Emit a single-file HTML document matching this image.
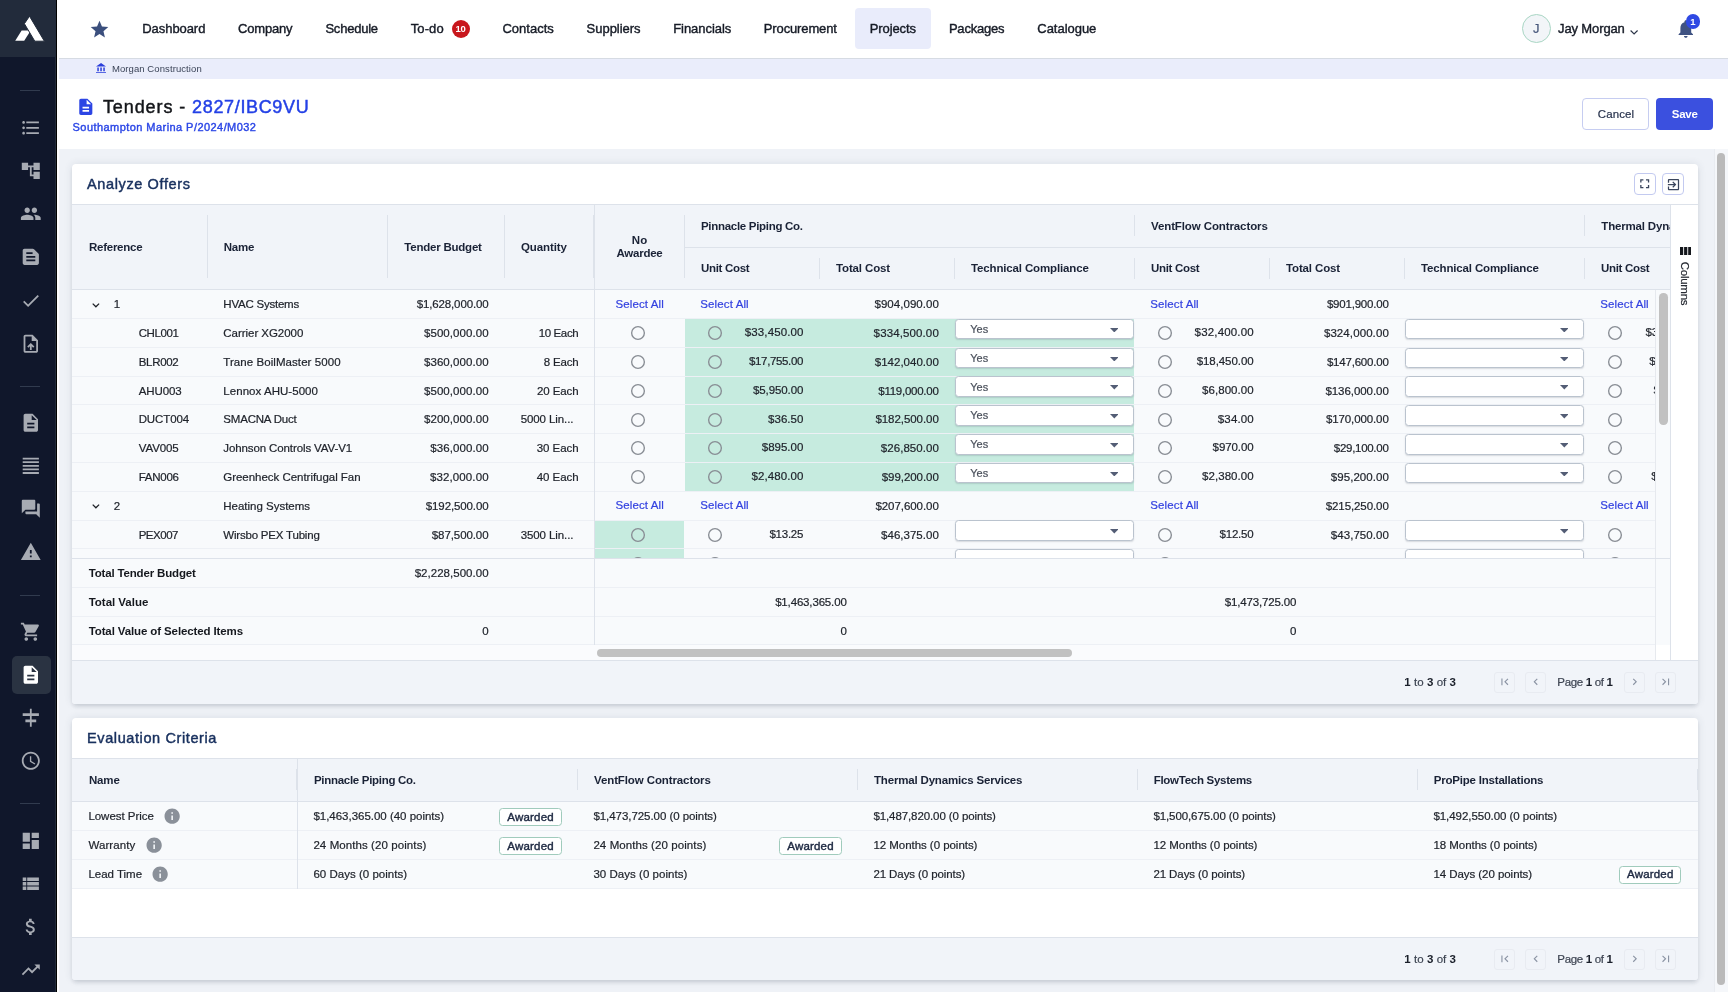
<!DOCTYPE html>
<html lang="en"><head><meta charset="utf-8"><title>Tenders - 2827/IBC9VU</title>
<style>
html,body{margin:0;padding:0}
body{width:1728px;height:992px;overflow:hidden;position:relative;background:#eff2f7;font-family:"Liberation Sans",sans-serif;color:#1f2533}
.t{position:absolute;white-space:pre;display:block;-webkit-text-stroke:.2px}
.t b,.bd,.ns{-webkit-text-stroke:0}
.t b{color:#1b202b}
.b{position:absolute;box-sizing:border-box}
.i{position:absolute;display:block}
.clip{position:absolute;overflow:hidden}
.m{-webkit-text-stroke:.4px}
.m2{-webkit-text-stroke:.45px}
#root{position:absolute;left:0;top:0;width:1728px;height:992px;will-change:transform}
</style></head><body><div id="root">
<div class="b" style="left:0.00px;top:0.00px;width:55.00px;height:992.00px;background:#10172b"></div>
<div class="b" style="left:55.00px;top:0.00px;width:1.00px;height:992.00px;background:#222b39"></div>
<div class="b" style="left:56.00px;top:0.00px;width:1.20px;height:992.00px;background:#000"></div>
<div class="b" style="left:0.00px;top:0.00px;width:56.00px;height:57.00px;background:#222b3b"></div>
<svg class="i" style="left:0;top:0;width:55px;height:57px" viewBox="0 0 55 57"><path fill="#fff" d="M21.6 30.4H28.6L29.6 32.3L24.2 40.7H15.2z"/><path fill="#fff" stroke="#222b3b" stroke-width="1" d="M29.5 16.2L44.4 41.2H34.8L24.4 23.7z"/></svg>
<div class="b" style="left:20.00px;top:90.20px;width:20.00px;height:1.30px;background:#313b4e"></div>
<div class="b" style="left:20.00px;top:385.70px;width:20.00px;height:1.30px;background:#313b4e"></div>
<div class="b" style="left:20.00px;top:594.70px;width:20.00px;height:1.30px;background:#313b4e"></div>
<div class="b" style="left:20.00px;top:802.80px;width:20.00px;height:1.30px;background:#313b4e"></div>
<div class="b" style="left:11.50px;top:655.50px;width:39.00px;height:38.50px;background:#2a3342;border-radius:5px"></div>
<svg class="i" style="left:19.90px;top:116.80px;width:21.6px;height:21.6px;" viewBox="0 0 24 24"><path fill="#a7abb3" d="M4 10.5c-.83 0-1.5.67-1.5 1.5s.67 1.5 1.5 1.5 1.5-.67 1.5-1.5-.67-1.5-1.5-1.5zm0-6c-.83 0-1.5.67-1.5 1.5S3.17 7.5 4 7.5 5.5 6.83 5.5 6 4.83 4.5 4 4.5zm0 12c-.83 0-1.5.68-1.5 1.5s.68 1.5 1.5 1.5 1.5-.68 1.5-1.5-.67-1.5-1.5-1.5zM7 19h14v-2H7v2zm0-6h14v-2H7v2zm0-8v2h14V5H7z"/></svg>
<svg class="i" style="left:19.90px;top:159.80px;width:21.6px;height:21.6px;" viewBox="0 0 24 24"><path fill="#a7abb3" d="M22 11V3h-7v3H9V3H2v8h7V8h2v10h4v3h7v-8h-7v3h-2V8h2v3z"/></svg>
<svg class="i" style="left:19.90px;top:203.20px;width:21.6px;height:21.6px;" viewBox="0 0 24 24"><path fill="#a7abb3" d="M16 11c1.66 0 2.99-1.34 2.99-3S17.66 5 16 5c-1.66 0-3 1.34-3 3s1.34 3 3 3zm-8 0c1.66 0 2.99-1.34 2.99-3S9.66 5 8 5C6.34 5 5 6.34 5 8s1.34 3 3 3zm0 2c-2.33 0-7 1.17-7 3.5V19h14v-2.5c0-2.33-4.67-3.5-7-3.5zm8 0c-.29 0-.62.02-.97.05 1.16.84 1.97 1.97 1.97 3.45V19h6v-2.5c0-2.33-4.67-3.5-7-3.5z"/></svg>
<svg class="i" style="left:19.90px;top:246.40px;width:21.6px;height:21.6px;" viewBox="0 0 24 24"><path fill="#a7abb3" d="M20.41 8.41l-4.83-4.83c-.37-.37-.88-.58-1.41-.58H5c-1.1 0-2 .9-2 2v14c0 1.1.9 2 2 2h14c1.1 0 2-.9 2-2V9.83c0-.53-.21-1.04-.59-1.42zM7 7h7v2H7V7zm10 10H7v-2h10v2zm0-4H7v-2h10v2z"/></svg>
<svg class="i" style="left:19.90px;top:289.60px;width:21.6px;height:21.6px;" viewBox="0 0 24 24"><path fill="#a7abb3" d="M9 16.17L4.83 12l-1.42 1.41L9 19 21 7l-1.41-1.41z"/></svg>
<svg class="i" style="left:19.90px;top:332.80px;width:21.6px;height:21.6px;" viewBox="0 0 24 24"><path fill="#a7abb3" d="M14 2H6c-1.1 0-2 .9-2 2v16c0 1.1.9 2 2 2h12c1.1 0 2-.9 2-2V8l-6-6zm4 18H6V4h7v5h5v11zM8 15.01l1.41 1.41L11 14.84V19h2v-4.16l1.59 1.59L16 15.01 12.01 11 8 15.01z"/></svg>
<svg class="i" style="left:19.90px;top:412.00px;width:21.6px;height:21.6px;" viewBox="0 0 24 24"><path fill="#a7abb3" d="M14 2H6c-1.1 0-1.99.9-1.99 2L4 20c0 1.1.89 2 1.99 2H18c1.1 0 2-.9 2-2V8l-6-6zm2 16H8v-2h8v2zm0-4H8v-2h8v2zm-3-5V3.5L18.5 9H13z"/></svg>
<svg class="i" style="left:19.90px;top:455.20px;width:21.6px;height:21.6px;" viewBox="0 0 24 24"><path fill="#a7abb3" d="M3 21h18v-2H3v2zm0-4h18v-2H3v2zm0-4h18v-2H3v2zm0-4h18V7H3v2zm0-6v2h18V3H3z"/></svg>
<svg class="i" style="left:19.90px;top:498.40px;width:21.6px;height:21.6px;" viewBox="0 0 24 24"><path fill="#a7abb3" d="M21 6h-2v9H6v2c0 .55.45 1 1 1h11l4 4V7c0-.55-.45-1-1-1zm-4 6V3c0-.55-.45-1-1-1H3c-.55 0-1 .45-1 1v14l4-4h10c.55 0 1-.45 1-1z"/></svg>
<svg class="i" style="left:19.90px;top:541.40px;width:21.6px;height:21.6px;" viewBox="0 0 24 24"><path fill="#a7abb3" d="M1 21h22L12 2 1 21zm12-3h-2v-2h2v2zm0-4h-2v-4h2v4z"/></svg>
<svg class="i" style="left:19.90px;top:620.80px;width:21.6px;height:21.6px;" viewBox="0 0 24 24"><path fill="#a7abb3" d="M7 18c-1.1 0-1.99.9-1.99 2S5.900 22 7 22s2-.9 2-2-.9-2-2-2zM1 2v2h2l3.600 7.590-1.350 2.450c-.16.28-.25.61-.25.96 0 1.100.9 2 2 2h12v-2H7.420c-.14 0-.25-.11-.25-.25l.03-.12.9-1.630h7.450c.75 0 1.410-.41 1.750-1.030l3.580-6.490c.08-.14.12-.31.12-.48 0-.55-.45-1-1-1H5.210l-.94-2H1zm16 16c-1.100 0-1.990.9-1.990 2s.89 2 1.990 2 2-.9 2-2-.9-2-2-2z"/></svg>
<svg class="i" style="left:19.90px;top:664.00px;width:21.6px;height:21.6px;" viewBox="0 0 24 24"><path fill="#ffffff" d="M14 2H6c-1.1 0-1.99.9-1.99 2L4 20c0 1.1.89 2 1.99 2H18c1.1 0 2-.9 2-2V8l-6-6zm2 16H8v-2h8v2zm0-4H8v-2h8v2zm-3-5V3.5L18.5 9H13z"/></svg>
<svg class="i" style="left:19.90px;top:707.00px;width:21.6px;height:21.6px;" viewBox="0 0 24 24"><path fill="#a7abb3" d="M11 2h2v5h8v3h-8v4h5v3h-5v5h-2v-5H6v-3h5v-4H3V7h8V2z"/></svg>
<svg class="i" style="left:19.90px;top:750.20px;width:21.6px;height:21.6px;" viewBox="0 0 24 24"><path fill="#a7abb3" d="M11.99 2C6.47 2 2 6.48 2 12s4.47 10 9.990 10C17.520 22 22 17.520 22 12S17.520 2 11.990 2zM12 20c-4.420 0-8-3.580-8-8s3.580-8 8-8 8 3.580 8 8-3.580 8-8 8zm.5-13H11v6l5.250 3.150.75-1.230-4.500-2.670z"/></svg>
<svg class="i" style="left:19.90px;top:829.60px;width:21.6px;height:21.6px;" viewBox="0 0 24 24"><path fill="#a7abb3" d="M3 13h8V3H3v10zm0 8h8v-6H3v6zm10 0h8V11h-8v10zm0-18v6h8V3h-8z"/></svg>
<svg class="i" style="left:19.90px;top:872.80px;width:21.6px;height:21.6px;" viewBox="0 0 24 24"><path fill="#a7abb3" d="M3 14h4v-4H3v4zm0 5h4v-4H3v4zM3 9h4V5H3v4zm5 5h13v-4H8v4zm0 5h13v-4H8v4zM8 5v4h13V5H8z"/></svg>
<svg class="i" style="left:19.90px;top:915.80px;width:21.6px;height:21.6px;" viewBox="0 0 24 24"><path fill="#a7abb3" d="M11.8 10.9c-2.270-.59-3-1.200-3-2.150 0-1.090 1.010-1.850 2.700-1.850 1.780 0 2.440.85 2.500 2.100h2.210c-.07-1.720-1.120-3.300-3.210-3.810V3h-3v2.160c-1.940.42-3.500 1.680-3.500 3.610 0 2.310 1.910 3.460 4.700 4.130 2.500.6 3 1.480 3 2.410 0 .69-.49 1.790-2.700 1.790-2.060 0-2.870-.92-2.980-2.100h-2.200c.12 2.190 1.760 3.420 3.680 3.830V21h3v-2.150c1.950-.37 3.500-1.500 3.500-3.550 0-2.840-2.430-3.810-4.700-4.400z"/></svg>
<svg class="i" style="left:19.90px;top:958.80px;width:21.6px;height:21.6px;" viewBox="0 0 24 24"><path fill="#a7abb3" d="M16 6l2.290 2.290-4.880 4.880-4-4L2 16.590 3.410 18l6-6 4 4 6.300-6.290L22 12V6z"/></svg>
<div class="b" style="left:57.00px;top:0.00px;width:1671.00px;height:57.50px;background:#fff"></div>
<div class="b" style="left:57.00px;top:57.50px;width:1671.00px;height:1.60px;background:#d6dbe3"></div>
<div class="b" style="left:57.00px;top:59.00px;width:1671.00px;height:20.00px;background:#eaedfb"></div>
<div class="b" style="left:57.00px;top:79.00px;width:1671.00px;height:70.30px;background:#fff"></div>
<svg class="i" style="left:89.30px;top:18.60px;width:21px;height:21px;" viewBox="0 0 24 24"><path fill="#3b4f7d" d="M12 17.27L18.18 21l-1.640-7.030L22 9.240l-7.190-.61L12 2 9.190 8.630 2 9.240l5.460 4.730L5.820 21z"/></svg>
<div class="b" style="left:855.00px;top:8.00px;width:75.50px;height:41.30px;background:#e9ecfb;border-radius:4px"></div>
<span class="t m" style="top:20.30px;line-height:17px;font-size:13px;color:#161b26;letter-spacing:-0.067px;left:142.30px;">Dashboard</span>
<span class="t m" style="top:20.30px;line-height:17px;font-size:13px;color:#161b26;letter-spacing:-0.206px;left:238.10px;">Company</span>
<span class="t m" style="top:20.30px;line-height:17px;font-size:13px;color:#161b26;letter-spacing:-0.214px;left:325.40px;">Schedule</span>
<span class="t m" style="top:20.30px;line-height:17px;font-size:13px;color:#161b26;letter-spacing:0.076px;left:410.80px;">To-do</span>
<span class="t m" style="top:20.30px;line-height:17px;font-size:13px;color:#161b26;letter-spacing:0.025px;left:502.40px;">Contacts</span>
<span class="t m" style="top:20.30px;line-height:17px;font-size:13px;color:#161b26;letter-spacing:-0.033px;left:586.60px;">Suppliers</span>
<span class="t m" style="top:20.30px;line-height:17px;font-size:13px;color:#161b26;letter-spacing:-0.043px;left:673.20px;">Financials</span>
<span class="t m" style="top:20.30px;line-height:17px;font-size:13px;color:#161b26;letter-spacing:-0.129px;left:763.80px;">Procurement</span>
<span class="t m" style="top:20.30px;line-height:17px;font-size:13px;color:#161b26;letter-spacing:-0.108px;left:869.80px;">Projects</span>
<span class="t m" style="top:20.30px;line-height:17px;font-size:13px;color:#161b26;letter-spacing:-0.199px;left:948.90px;">Packages</span>
<span class="t m" style="top:20.30px;line-height:17px;font-size:13px;color:#161b26;letter-spacing:-0.030px;left:1037.30px;">Catalogue</span>
<div class="b" style="left:451.60px;top:19.70px;width:18.00px;height:18.00px;background:#c8171d;border-radius:50%"></div>
<span class="t bd" style="top:22.40px;line-height:13px;font-size:9.5px;font-weight:700;color:#fff;letter-spacing:-0.300px;left:455.47px;">10</span>
<div class="b" style="left:1521.80px;top:13.90px;width:29.00px;height:29.00px;background:#f2f5f8;border:1px solid #a9d6c4;border-radius:50%"></div>
<span class="t " style="top:20.10px;line-height:17px;font-size:13px;color:#46567a;left:1533.05px;">J</span>
<span class="t m" style="top:20.30px;line-height:17px;font-size:13px;color:#161b26;letter-spacing:-0.122px;left:1558.00px;">Jay Morgan</span>
<svg class="i" style="left:1630.30px;top:29.90px;width:8.2px;height:4.6px;overflow:visible" viewBox="0 0 8.2 4.6"><path fill="none" stroke="#2b3447" stroke-width="1.15"  d="M0.6 0.5L4.1 4L7.6 0.5"/></svg>
<svg class="i" style="left:1675.10px;top:18.10px;width:21.6px;height:21.6px;" viewBox="0 0 24 24"><path fill="#3f5282" d="M12 22c1.100 0 2-.9 2-2h-4c0 1.100.89 2 2 2zm6-6v-5c0-3.070-1.640-5.640-4.500-6.320V4c0-.83-.67-1.500-1.500-1.500s-1.500.67-1.500 1.500v.68C7.630 5.360 6 7.920 6 11v5l-2 2v1h16v-1l-2-2z"/></svg>
<div class="b" style="left:1685.70px;top:14.40px;width:14.50px;height:14.50px;background:#2f49e3;border-radius:50%"></div>
<span class="t bd" style="top:15.30px;line-height:13px;font-size:9.5px;font-weight:700;color:#fff;left:1690.16px;">1</span>
<svg class="i" style="left:95.9px;top:62.6px;width:10.1px;height:10.6px" preserveAspectRatio="none" viewBox="0 0 10.8 10.6"><path fill="#2a3edb" d="M0 3.5L5.4 0L10.8 3.5zM1.4 4.6h1.6v3.7H1.4zM4.6 4.6h1.6v3.7H4.6zM7.8 4.6h1.6v3.7H7.8zM0 9.3h10.8v1.3H0z"/></svg>
<span class="t ns" style="top:62.10px;line-height:13px;font-size:9.5px;color:#3b4458;letter-spacing:0.090px;left:111.90px;">Morgan Construction</span>
<svg class="i" style="left:75.50px;top:96.90px;width:19.6px;height:19.6px;" viewBox="0 0 24 24"><path fill="#2c45e4" d="M14 2H6c-1.1 0-1.99.9-1.99 2L4 20c0 1.1.89 2 1.99 2H18c1.1 0 2-.9 2-2V8l-6-6zm2 16H8v-2h8v2zm0-4H8v-2h8v2zm-3-5V3.5L18.5 9H13z"/></svg>
<span class="t m2" style="top:94.80px;line-height:24px;font-size:18px;color:#14161a;letter-spacing:0.916px;left:102.90px;">Tenders - </span>
<span class="t m2" style="top:94.80px;line-height:24px;font-size:18px;color:#2340e6;letter-spacing:0.648px;left:192.10px;">2827/IBC9VU</span>
<span class="t m" style="top:120.30px;line-height:15px;font-size:11px;color:#2b46e6;letter-spacing:0.440px;left:72.60px;">Southampton Marina P/2024/M032</span>
<div class="b" style="left:1582.40px;top:98.30px;width:66.60px;height:32.00px;background:#fff;border:1px solid #c6cdf1;border-radius:4px"></div>
<span class="t " style="top:106.80px;line-height:15px;font-size:11.5px;color:#27324c;letter-spacing:0.100px;left:1597.75px;">Cancel</span>
<div class="b" style="left:1656.00px;top:98.30px;width:57.20px;height:32.00px;background:#3b50df;border-radius:4px"></div>
<span class="t bd" style="top:106.80px;line-height:15px;font-size:11.5px;font-weight:700;color:#fff;letter-spacing:-0.215px;left:1671.69px;">Save</span>
<div class="b" style="left:1713.50px;top:149.30px;width:14.50px;height:843.00px;background:#f5f7fa;border-left:1px solid #e9ecf1"></div>
<div class="b" style="left:1717.00px;top:153.00px;width:8.20px;height:832.00px;background:#bababa;border-radius:4.1px"></div>
<div class="b" style="left:72.00px;top:164.00px;width:1626.00px;height:540.00px;background:#fff;border-radius:4px;box-shadow:0 0 9px rgba(50,60,80,.11),0 3px 4px -1px rgba(50,60,80,.17)"></div>
<span class="t m2" style="top:175.10px;line-height:19px;font-size:14.5px;color:#18305e;letter-spacing:0.626px;left:87.00px;">Analyze Offers</span>
<div class="b" style="left:1634.00px;top:173.00px;width:22.00px;height:22.00px;background:#fff;border:1px solid #c3caf0;border-radius:4px"></div>
<svg class="i" style="left:1637.30px;top:176.40px;width:15.4px;height:15.4px;" viewBox="0 0 24 24"><path fill="#3a455c" d="M7 14H5v5h5v-2H7v-3zm-2-4h2V7h3V5H5v5zm12 7h-3v2h5v-5h-2v3zM14 5v2h3v3h2V5h-5z"/></svg>
<div class="b" style="left:1662.40px;top:173.00px;width:22.00px;height:22.00px;background:#fff;border:1px solid #c3caf0;border-radius:4px"></div>
<svg class="i" style="left:1665.90px;top:176.70px;width:15px;height:15px;" viewBox="0 0 24 24"><path fill="#3a455c" d="M10.090 15.590L11.500 17l5-5-5-5-1.410 1.410L12.670 11H3v2h9.670l-2.580 2.590zM19 3H5c-1.110 0-2 .9-2 2v4h2V5h14v14H5v-4H3v4c0 1.100.89 2 2 2h14c1.100 0 2-.9 2-2V5c0-1.100-.9-2-2-2z"/></svg>
<div class="b" style="left:72.00px;top:204.00px;width:1626.00px;height:1.00px;background:#dde2ea"></div>
<div class="b" style="left:72.00px;top:205.00px;width:1598.50px;height:84.20px;background:#f1f4f9"></div>
<div class="b" style="left:72.00px;top:289.20px;width:1598.50px;height:1.00px;background:#dde2ea"></div>
<div class="b" style="left:206.70px;top:215.00px;width:1.00px;height:63.00px;background:#dde2ea"></div>
<div class="b" style="left:386.70px;top:215.00px;width:1.00px;height:63.00px;background:#dde2ea"></div>
<div class="b" style="left:503.80px;top:215.00px;width:1.00px;height:63.00px;background:#dde2ea"></div>
<div class="b" style="left:593.40px;top:215.00px;width:1.00px;height:63.00px;background:#dde2ea"></div>
<div class="b" style="left:683.80px;top:215.00px;width:1.00px;height:63.00px;background:#dde2ea"></div>
<div class="b" style="left:819.00px;top:258.00px;width:1.00px;height:21.00px;background:#dde2ea"></div>
<div class="b" style="left:954.00px;top:258.00px;width:1.00px;height:21.00px;background:#dde2ea"></div>
<div class="b" style="left:1269.00px;top:258.00px;width:1.00px;height:21.00px;background:#dde2ea"></div>
<div class="b" style="left:1404.00px;top:258.00px;width:1.00px;height:21.00px;background:#dde2ea"></div>
<div class="b" style="left:1134.00px;top:215.00px;width:1.00px;height:21.00px;background:#dde2ea"></div>
<div class="b" style="left:1134.00px;top:258.00px;width:1.00px;height:21.00px;background:#dde2ea"></div>
<div class="b" style="left:1584.00px;top:215.00px;width:1.00px;height:21.00px;background:#dde2ea"></div>
<div class="b" style="left:1584.00px;top:258.00px;width:1.00px;height:21.00px;background:#dde2ea"></div>
<div class="b" style="left:684.00px;top:246.50px;width:986.50px;height:1.00px;background:#dde2ea"></div>
<span class="t bd" style="top:239.70px;line-height:15px;font-size:11.5px;font-weight:700;color:#1a2236;letter-spacing:-0.257px;left:89.00px;">Reference</span>
<span class="t bd" style="top:239.70px;line-height:15px;font-size:11.5px;font-weight:700;color:#1a2236;letter-spacing:-0.181px;left:223.70px;">Name</span>
<span class="t bd" style="top:239.70px;line-height:15px;font-size:11.5px;font-weight:700;color:#1a2236;letter-spacing:-0.222px;left:404.30px;">Tender Budget</span>
<span class="t bd" style="top:239.70px;line-height:15px;font-size:11.5px;font-weight:700;color:#1a2236;letter-spacing:-0.118px;left:521.00px;">Quantity</span>
<span class="t bd" style="top:232.90px;line-height:15px;font-size:11.5px;font-weight:700;color:#1a2236;left:631.83px;">No</span>
<span class="t bd" style="top:245.70px;line-height:15px;font-size:11.5px;font-weight:700;color:#1a2236;letter-spacing:-0.233px;left:616.43px;">Awardee</span>
<span class="t bd" style="top:218.90px;line-height:15px;font-size:11.5px;font-weight:700;color:#1a2236;letter-spacing:-0.297px;left:701.00px;">Pinnacle Piping Co.</span>
<span class="t bd" style="top:218.90px;line-height:15px;font-size:11.5px;font-weight:700;color:#1a2236;letter-spacing:-0.107px;left:1151.00px;">VentFlow Contractors</span>
<div class="clip" style="left:1590px;top:210px;width:80.5px;height:32px">
<span class="t bd" style="top:8.90px;line-height:15px;font-size:11.5px;font-weight:700;color:#1a2236;letter-spacing:-0.179px;left:11.30px;">Thermal Dynamics Services</span>
</div>
<span class="t bd" style="top:260.80px;line-height:15px;font-size:11.5px;font-weight:700;color:#1a2236;letter-spacing:-0.312px;left:701.00px;">Unit Cost</span>
<span class="t bd" style="top:260.80px;line-height:15px;font-size:11.5px;font-weight:700;color:#1a2236;letter-spacing:-0.137px;left:836.00px;">Total Cost</span>
<span class="t bd" style="top:260.80px;line-height:15px;font-size:11.5px;font-weight:700;color:#1a2236;letter-spacing:-0.144px;left:971.00px;">Technical Compliance</span>
<span class="t bd" style="top:260.80px;line-height:15px;font-size:11.5px;font-weight:700;color:#1a2236;letter-spacing:-0.312px;left:1151.00px;">Unit Cost</span>
<span class="t bd" style="top:260.80px;line-height:15px;font-size:11.5px;font-weight:700;color:#1a2236;letter-spacing:-0.137px;left:1286.00px;">Total Cost</span>
<span class="t bd" style="top:260.80px;line-height:15px;font-size:11.5px;font-weight:700;color:#1a2236;letter-spacing:-0.144px;left:1421.00px;">Technical Compliance</span>
<span class="t bd" style="top:260.80px;line-height:15px;font-size:11.5px;font-weight:700;color:#1a2236;letter-spacing:-0.312px;left:1601.00px;">Unit Cost</span>
<div class="clip" style="left:72px;top:290.2px;width:1583.4px;height:268.2px;background:#f8fafc">
<div class="b" style="left:0.00px;top:27.80px;width:1584.00px;height:1.00px;background:#edf0f5"></div>
<svg class="i" style="left:19.60px;top:12.40px;width:7.8px;height:4.4px;overflow:visible" viewBox="0 0 7.8 4.4"><path fill="none" stroke="#1d2026" stroke-width="1.25"  d="M0.7 0.6L3.9 3.8L7.1 0.6"/></svg>
<span class="t " style="top:7.10px;line-height:15px;font-size:11.5px;color:#20242c;left:41.80px;">1</span>
<span class="t " style="top:7.10px;line-height:15px;font-size:11.5px;color:#20242c;letter-spacing:-0.224px;left:151.30px;">HVAC Systems</span>
<span class="t " style="top:7.10px;line-height:15px;font-size:11.5px;color:#20242c;letter-spacing:-0.142px;left:344.76px;">$1,628,000.00</span>
<span class="t " style="top:6.40px;line-height:15px;font-size:11.5px;color:#3442e0;letter-spacing:0.120px;left:543.41px;">Select All</span>
<span class="t " style="top:6.40px;line-height:15px;font-size:11.5px;color:#3442e0;letter-spacing:0.120px;left:628.30px;">Select All</span>
<span class="t " style="top:7.10px;line-height:15px;font-size:11.5px;color:#20242c;letter-spacing:0.032px;left:802.53px;">$904,090.00</span>
<span class="t " style="top:6.40px;line-height:15px;font-size:11.5px;color:#3442e0;letter-spacing:0.120px;left:1078.30px;">Select All</span>
<span class="t " style="top:7.10px;line-height:15px;font-size:11.5px;color:#20242c;letter-spacing:-0.205px;left:1254.90px;">$901,900.00</span>
<span class="t " style="top:6.40px;line-height:15px;font-size:11.5px;color:#3442e0;letter-spacing:0.120px;left:1528.30px;">Select All</span>
<div class="b" style="left:612.60px;top:28.80px;width:449.60px;height:28.80px;background:#c6ebdf"></div>
<div class="b" style="left:0.00px;top:56.60px;width:1584.00px;height:1.00px;background:#edf0f5"></div>
<span class="t " style="top:35.90px;line-height:15px;font-size:11.5px;color:#20242c;letter-spacing:-0.416px;left:66.70px;">CHL001</span>
<span class="t " style="top:35.90px;line-height:15px;font-size:11.5px;color:#20242c;letter-spacing:-0.038px;left:151.30px;">Carrier XG2000</span>
<span class="t " style="top:35.90px;line-height:15px;font-size:11.5px;color:#20242c;letter-spacing:0.068px;left:351.97px;">$500,000.00</span>
<span class="t " style="top:35.90px;line-height:15px;font-size:11.5px;color:#20242c;letter-spacing:-0.357px;left:466.64px;">10 Each</span>
<svg class="i" style="left:557.80px;top:35.10px;width:16px;height:16px" viewBox="0 0 16 16"><circle cx="8" cy="8" r="6.35" fill="none" stroke="#888d94" stroke-width="1.35"/></svg>
<svg class="i" style="left:634.60px;top:35.10px;width:16px;height:16px" viewBox="0 0 16 16"><circle cx="8" cy="8" r="6.35" fill="none" stroke="#888d94" stroke-width="1.35"/></svg>
<span class="t " style="top:35.10px;line-height:15px;font-size:11.5px;color:#20242c;letter-spacing:0.114px;left:672.81px;">$33,450.00</span>
<span class="t " style="top:35.90px;line-height:15px;font-size:11.5px;color:#20242c;letter-spacing:0.122px;left:801.62px;">$334,500.00</span>
<div class="b" style="left:883.00px;top:28.70px;width:178.60px;height:20.60px;background:#fff;border:1px solid #bac3ce;border-radius:3.5px;box-shadow:0 1px 1.5px rgba(60,70,90,.18)"></div>
<span class="t " style="top:31.80px;line-height:15px;font-size:11px;color:#4b515c;left:898.30px;">Yes</span>
<svg class="i" style="left:1037.8px;top:37.7px;width:8.6px;height:4.5px" viewBox="0 0 10 5"><path fill="#535d75" d="M0 0h10L5 5z"/></svg>
<svg class="i" style="left:1084.60px;top:35.10px;width:16px;height:16px" viewBox="0 0 16 16"><circle cx="8" cy="8" r="6.35" fill="none" stroke="#888d94" stroke-width="1.35"/></svg>
<span class="t " style="top:35.10px;line-height:15px;font-size:11.5px;color:#20242c;letter-spacing:0.174px;left:1122.57px;">$32,400.00</span>
<span class="t " style="top:35.90px;line-height:15px;font-size:11.5px;color:#20242c;letter-spacing:0.095px;left:1251.90px;">$324,000.00</span>
<div class="b" style="left:1333.00px;top:28.70px;width:178.60px;height:20.60px;background:#fff;border:1px solid #bac3ce;border-radius:3.5px;box-shadow:0 1px 1.5px rgba(60,70,90,.18)"></div>
<svg class="i" style="left:1487.8px;top:37.7px;width:8.6px;height:4.5px" viewBox="0 0 10 5"><path fill="#535d75" d="M0 0h10L5 5z"/></svg>
<svg class="i" style="left:1534.60px;top:35.10px;width:16px;height:16px" viewBox="0 0 16 16"><circle cx="8" cy="8" r="6.35" fill="none" stroke="#888d94" stroke-width="1.35"/></svg>
<span class="t " style="top:35.10px;line-height:15px;font-size:11.5px;color:#20242c;letter-spacing:0.084px;left:1573.38px;">$33,800.00</span>
<div class="b" style="left:612.60px;top:57.60px;width:449.60px;height:28.80px;background:#c6ebdf"></div>
<div class="b" style="left:0.00px;top:85.40px;width:1584.00px;height:1.00px;background:#edf0f5"></div>
<span class="t " style="top:64.70px;line-height:15px;font-size:11.5px;color:#20242c;letter-spacing:-0.310px;left:66.70px;">BLR002</span>
<span class="t " style="top:64.70px;line-height:15px;font-size:11.5px;color:#20242c;letter-spacing:0.066px;left:151.30px;">Trane BoilMaster 5000</span>
<span class="t " style="top:64.70px;line-height:15px;font-size:11.5px;color:#20242c;letter-spacing:0.068px;left:351.97px;">$360,000.00</span>
<span class="t " style="top:64.70px;line-height:15px;font-size:11.5px;color:#20242c;letter-spacing:-0.184px;left:471.82px;">8 Each</span>
<svg class="i" style="left:557.80px;top:63.90px;width:16px;height:16px" viewBox="0 0 16 16"><circle cx="8" cy="8" r="6.35" fill="none" stroke="#888d94" stroke-width="1.35"/></svg>
<svg class="i" style="left:634.60px;top:63.90px;width:16px;height:16px" viewBox="0 0 16 16"><circle cx="8" cy="8" r="6.35" fill="none" stroke="#888d94" stroke-width="1.35"/></svg>
<span class="t " style="top:63.90px;line-height:15px;font-size:11.5px;color:#20242c;letter-spacing:-0.356px;left:677.04px;">$17,755.00</span>
<span class="t " style="top:64.70px;line-height:15px;font-size:11.5px;color:#20242c;letter-spacing:0.004px;left:802.80px;">$142,040.00</span>
<div class="b" style="left:883.00px;top:57.50px;width:178.60px;height:20.60px;background:#fff;border:1px solid #bac3ce;border-radius:3.5px;box-shadow:0 1px 1.5px rgba(60,70,90,.18)"></div>
<span class="t " style="top:60.60px;line-height:15px;font-size:11px;color:#4b515c;left:898.30px;">Yes</span>
<svg class="i" style="left:1037.8px;top:66.5px;width:8.6px;height:4.5px" viewBox="0 0 10 5"><path fill="#535d75" d="M0 0h10L5 5z"/></svg>
<svg class="i" style="left:1084.60px;top:63.90px;width:16px;height:16px" viewBox="0 0 16 16"><circle cx="8" cy="8" r="6.35" fill="none" stroke="#888d94" stroke-width="1.35"/></svg>
<span class="t " style="top:63.90px;line-height:15px;font-size:11.5px;color:#20242c;letter-spacing:-0.056px;left:1124.64px;">$18,450.00</span>
<span class="t " style="top:64.70px;line-height:15px;font-size:11.5px;color:#20242c;letter-spacing:-0.205px;left:1254.90px;">$147,600.00</span>
<div class="b" style="left:1333.00px;top:57.50px;width:178.60px;height:20.60px;background:#fff;border:1px solid #bac3ce;border-radius:3.5px;box-shadow:0 1px 1.5px rgba(60,70,90,.18)"></div>
<svg class="i" style="left:1487.8px;top:66.5px;width:8.6px;height:4.5px" viewBox="0 0 10 5"><path fill="#535d75" d="M0 0h10L5 5z"/></svg>
<svg class="i" style="left:1534.60px;top:63.90px;width:16px;height:16px" viewBox="0 0 16 16"><circle cx="8" cy="8" r="6.35" fill="none" stroke="#888d94" stroke-width="1.35"/></svg>
<span class="t " style="top:63.90px;line-height:15px;font-size:11.5px;color:#20242c;letter-spacing:-0.336px;left:1577.16px;">$18,900.00</span>
<div class="b" style="left:612.60px;top:86.40px;width:449.60px;height:28.80px;background:#c6ebdf"></div>
<div class="b" style="left:0.00px;top:114.20px;width:1584.00px;height:1.00px;background:#edf0f5"></div>
<span class="t " style="top:93.50px;line-height:15px;font-size:11.5px;color:#20242c;letter-spacing:-0.078px;left:66.70px;">AHU003</span>
<span class="t " style="top:93.50px;line-height:15px;font-size:11.5px;color:#20242c;letter-spacing:0.048px;left:151.30px;">Lennox AHU-5000</span>
<span class="t " style="top:93.50px;line-height:15px;font-size:11.5px;color:#20242c;letter-spacing:0.068px;left:351.97px;">$500,000.00</span>
<span class="t " style="top:93.50px;line-height:15px;font-size:11.5px;color:#20242c;letter-spacing:-0.071px;left:464.93px;">20 Each</span>
<svg class="i" style="left:557.80px;top:92.70px;width:16px;height:16px" viewBox="0 0 16 16"><circle cx="8" cy="8" r="6.35" fill="none" stroke="#888d94" stroke-width="1.35"/></svg>
<svg class="i" style="left:634.60px;top:92.70px;width:16px;height:16px" viewBox="0 0 16 16"><circle cx="8" cy="8" r="6.35" fill="none" stroke="#888d94" stroke-width="1.35"/></svg>
<span class="t " style="top:92.70px;line-height:15px;font-size:11.5px;color:#20242c;letter-spacing:-0.096px;left:681.00px;">$5,950.00</span>
<span class="t " style="top:93.50px;line-height:15px;font-size:11.5px;color:#20242c;letter-spacing:-0.255px;left:806.25px;">$119,000.00</span>
<div class="b" style="left:883.00px;top:86.30px;width:178.60px;height:20.60px;background:#fff;border:1px solid #bac3ce;border-radius:3.5px;box-shadow:0 1px 1.5px rgba(60,70,90,.18)"></div>
<span class="t " style="top:89.40px;line-height:15px;font-size:11px;color:#4b515c;left:898.30px;">Yes</span>
<svg class="i" style="left:1037.8px;top:95.3px;width:8.6px;height:4.5px" viewBox="0 0 10 5"><path fill="#535d75" d="M0 0h10L5 5z"/></svg>
<svg class="i" style="left:1084.60px;top:92.70px;width:16px;height:16px" viewBox="0 0 16 16"><circle cx="8" cy="8" r="6.35" fill="none" stroke="#888d94" stroke-width="1.35"/></svg>
<span class="t " style="top:92.70px;line-height:15px;font-size:11.5px;color:#20242c;letter-spacing:0.060px;left:1130.06px;">$6,800.00</span>
<span class="t " style="top:93.50px;line-height:15px;font-size:11.5px;color:#20242c;letter-spacing:-0.059px;left:1253.44px;">$136,000.00</span>
<div class="b" style="left:1333.00px;top:86.30px;width:178.60px;height:20.60px;background:#fff;border:1px solid #bac3ce;border-radius:3.5px;box-shadow:0 1px 1.5px rgba(60,70,90,.18)"></div>
<svg class="i" style="left:1487.8px;top:95.3px;width:8.6px;height:4.5px" viewBox="0 0 10 5"><path fill="#535d75" d="M0 0h10L5 5z"/></svg>
<svg class="i" style="left:1534.60px;top:92.70px;width:16px;height:16px" viewBox="0 0 16 16"><circle cx="8" cy="8" r="6.35" fill="none" stroke="#888d94" stroke-width="1.35"/></svg>
<span class="t " style="top:92.70px;line-height:15px;font-size:11.5px;color:#20242c;letter-spacing:-0.129px;left:1581.57px;">$6,900.00</span>
<div class="b" style="left:612.60px;top:115.20px;width:449.60px;height:28.80px;background:#c6ebdf"></div>
<div class="b" style="left:0.00px;top:143.00px;width:1584.00px;height:1.00px;background:#edf0f5"></div>
<span class="t " style="top:122.30px;line-height:15px;font-size:11.5px;color:#20242c;letter-spacing:-0.118px;left:66.70px;">DUCT004</span>
<span class="t " style="top:122.30px;line-height:15px;font-size:11.5px;color:#20242c;letter-spacing:-0.192px;left:151.30px;">SMACNA Duct</span>
<span class="t " style="top:122.30px;line-height:15px;font-size:11.5px;color:#20242c;letter-spacing:0.068px;left:351.97px;">$200,000.00</span>
<span class="t " style="top:122.30px;line-height:15px;font-size:11.5px;color:#20242c;letter-spacing:-0.092px;left:448.70px;">5000 Lin...</span>
<svg class="i" style="left:557.80px;top:121.50px;width:16px;height:16px" viewBox="0 0 16 16"><circle cx="8" cy="8" r="6.35" fill="none" stroke="#888d94" stroke-width="1.35"/></svg>
<svg class="i" style="left:634.60px;top:121.50px;width:16px;height:16px" viewBox="0 0 16 16"><circle cx="8" cy="8" r="6.35" fill="none" stroke="#888d94" stroke-width="1.35"/></svg>
<span class="t " style="top:121.50px;line-height:15px;font-size:11.5px;color:#20242c;letter-spacing:0.021px;left:696.12px;">$36.50</span>
<span class="t " style="top:122.30px;line-height:15px;font-size:11.5px;color:#20242c;letter-spacing:-0.059px;left:803.44px;">$182,500.00</span>
<div class="b" style="left:883.00px;top:115.10px;width:178.60px;height:20.60px;background:#fff;border:1px solid #bac3ce;border-radius:3.5px;box-shadow:0 1px 1.5px rgba(60,70,90,.18)"></div>
<span class="t " style="top:118.20px;line-height:15px;font-size:11px;color:#4b515c;left:898.30px;">Yes</span>
<svg class="i" style="left:1037.8px;top:124.1px;width:8.6px;height:4.5px" viewBox="0 0 10 5"><path fill="#535d75" d="M0 0h10L5 5z"/></svg>
<svg class="i" style="left:1084.60px;top:121.50px;width:16px;height:16px" viewBox="0 0 16 16"><circle cx="8" cy="8" r="6.35" fill="none" stroke="#888d94" stroke-width="1.35"/></svg>
<span class="t " style="top:121.50px;line-height:15px;font-size:11.5px;color:#20242c;letter-spacing:0.138px;left:1145.84px;">$34.00</span>
<span class="t " style="top:122.30px;line-height:15px;font-size:11.5px;color:#20242c;letter-spacing:-0.114px;left:1253.99px;">$170,000.00</span>
<div class="b" style="left:1333.00px;top:115.10px;width:178.60px;height:20.60px;background:#fff;border:1px solid #bac3ce;border-radius:3.5px;box-shadow:0 1px 1.5px rgba(60,70,90,.18)"></div>
<svg class="i" style="left:1487.8px;top:124.1px;width:8.6px;height:4.5px" viewBox="0 0 10 5"><path fill="#535d75" d="M0 0h10L5 5z"/></svg>
<svg class="i" style="left:1534.60px;top:121.50px;width:16px;height:16px" viewBox="0 0 16 16"><circle cx="8" cy="8" r="6.35" fill="none" stroke="#888d94" stroke-width="1.35"/></svg>
<span class="t " style="top:121.50px;line-height:15px;font-size:11.5px;color:#20242c;letter-spacing:-0.150px;left:1597.28px;">$35.00</span>
<div class="b" style="left:612.60px;top:144.00px;width:449.60px;height:28.80px;background:#c6ebdf"></div>
<div class="b" style="left:0.00px;top:171.80px;width:1584.00px;height:1.00px;background:#edf0f5"></div>
<span class="t " style="top:151.10px;line-height:15px;font-size:11.5px;color:#20242c;letter-spacing:-0.082px;left:66.70px;">VAV005</span>
<span class="t " style="top:151.10px;line-height:15px;font-size:11.5px;color:#20242c;letter-spacing:-0.111px;left:151.30px;">Johnson Controls VAV-V1</span>
<span class="t " style="top:151.10px;line-height:15px;font-size:11.5px;color:#20242c;letter-spacing:0.074px;left:358.37px;">$36,000.00</span>
<span class="t " style="top:151.10px;line-height:15px;font-size:11.5px;color:#20242c;letter-spacing:-0.029px;left:464.67px;">30 Each</span>
<svg class="i" style="left:557.80px;top:150.30px;width:16px;height:16px" viewBox="0 0 16 16"><circle cx="8" cy="8" r="6.35" fill="none" stroke="#888d94" stroke-width="1.35"/></svg>
<svg class="i" style="left:634.60px;top:150.30px;width:16px;height:16px" viewBox="0 0 16 16"><circle cx="8" cy="8" r="6.35" fill="none" stroke="#888d94" stroke-width="1.35"/></svg>
<span class="t " style="top:150.30px;line-height:15px;font-size:11.5px;color:#20242c;letter-spacing:0.018px;left:689.72px;">$895.00</span>
<span class="t " style="top:151.10px;line-height:15px;font-size:11.5px;color:#20242c;letter-spacing:0.044px;left:808.84px;">$26,850.00</span>
<div class="b" style="left:883.00px;top:143.90px;width:178.60px;height:20.60px;background:#fff;border:1px solid #bac3ce;border-radius:3.5px;box-shadow:0 1px 1.5px rgba(60,70,90,.18)"></div>
<span class="t " style="top:147.00px;line-height:15px;font-size:11px;color:#4b515c;left:898.30px;">Yes</span>
<svg class="i" style="left:1037.8px;top:152.9px;width:8.6px;height:4.5px" viewBox="0 0 10 5"><path fill="#535d75" d="M0 0h10L5 5z"/></svg>
<svg class="i" style="left:1084.60px;top:150.30px;width:16px;height:16px" viewBox="0 0 16 16"><circle cx="8" cy="8" r="6.35" fill="none" stroke="#888d94" stroke-width="1.35"/></svg>
<span class="t " style="top:150.30px;line-height:15px;font-size:11.5px;color:#20242c;letter-spacing:-0.082px;left:1140.62px;">$970.00</span>
<span class="t " style="top:151.10px;line-height:15px;font-size:11.5px;color:#20242c;letter-spacing:-0.286px;left:1261.81px;">$29,100.00</span>
<div class="b" style="left:1333.00px;top:143.90px;width:178.60px;height:20.60px;background:#fff;border:1px solid #bac3ce;border-radius:3.5px;box-shadow:0 1px 1.5px rgba(60,70,90,.18)"></div>
<svg class="i" style="left:1487.8px;top:152.9px;width:8.6px;height:4.5px" viewBox="0 0 10 5"><path fill="#535d75" d="M0 0h10L5 5z"/></svg>
<svg class="i" style="left:1534.60px;top:150.30px;width:16px;height:16px" viewBox="0 0 16 16"><circle cx="8" cy="8" r="6.35" fill="none" stroke="#888d94" stroke-width="1.35"/></svg>
<span class="t " style="top:150.30px;line-height:15px;font-size:11.5px;color:#20242c;letter-spacing:-0.150px;left:1591.03px;">$985.00</span>
<div class="b" style="left:612.60px;top:172.80px;width:449.60px;height:28.80px;background:#c6ebdf"></div>
<div class="b" style="left:0.00px;top:200.60px;width:1584.00px;height:1.00px;background:#edf0f5"></div>
<span class="t " style="top:179.90px;line-height:15px;font-size:11.5px;color:#20242c;letter-spacing:-0.259px;left:66.70px;">FAN006</span>
<span class="t " style="top:179.90px;line-height:15px;font-size:11.5px;color:#20242c;letter-spacing:-0.031px;left:151.30px;">Greenheck Centrifugal Fan</span>
<span class="t " style="top:179.90px;line-height:15px;font-size:11.5px;color:#20242c;letter-spacing:0.114px;left:358.01px;">$32,000.00</span>
<span class="t " style="top:179.90px;line-height:15px;font-size:11.5px;color:#20242c;letter-spacing:-0.029px;left:464.67px;">40 Each</span>
<svg class="i" style="left:557.80px;top:179.10px;width:16px;height:16px" viewBox="0 0 16 16"><circle cx="8" cy="8" r="6.35" fill="none" stroke="#888d94" stroke-width="1.35"/></svg>
<svg class="i" style="left:634.60px;top:179.10px;width:16px;height:16px" viewBox="0 0 16 16"><circle cx="8" cy="8" r="6.35" fill="none" stroke="#888d94" stroke-width="1.35"/></svg>
<span class="t " style="top:179.10px;line-height:15px;font-size:11.5px;color:#20242c;letter-spacing:0.093px;left:679.49px;">$2,480.00</span>
<span class="t " style="top:179.90px;line-height:15px;font-size:11.5px;color:#20242c;letter-spacing:-0.056px;left:809.74px;">$99,200.00</span>
<div class="b" style="left:883.00px;top:172.70px;width:178.60px;height:20.60px;background:#fff;border:1px solid #bac3ce;border-radius:3.5px;box-shadow:0 1px 1.5px rgba(60,70,90,.18)"></div>
<span class="t " style="top:175.80px;line-height:15px;font-size:11px;color:#4b515c;left:898.30px;">Yes</span>
<svg class="i" style="left:1037.8px;top:181.7px;width:8.6px;height:4.5px" viewBox="0 0 10 5"><path fill="#535d75" d="M0 0h10L5 5z"/></svg>
<svg class="i" style="left:1084.60px;top:179.10px;width:16px;height:16px" viewBox="0 0 16 16"><circle cx="8" cy="8" r="6.35" fill="none" stroke="#888d94" stroke-width="1.35"/></svg>
<span class="t " style="top:179.10px;line-height:15px;font-size:11.5px;color:#20242c;letter-spacing:0.060px;left:1130.06px;">$2,380.00</span>
<span class="t " style="top:179.90px;line-height:15px;font-size:11.5px;color:#20242c;letter-spacing:0.044px;left:1258.84px;">$95,200.00</span>
<div class="b" style="left:1333.00px;top:172.70px;width:178.60px;height:20.60px;background:#fff;border:1px solid #bac3ce;border-radius:3.5px;box-shadow:0 1px 1.5px rgba(60,70,90,.18)"></div>
<svg class="i" style="left:1487.8px;top:181.7px;width:8.6px;height:4.5px" viewBox="0 0 10 5"><path fill="#535d75" d="M0 0h10L5 5z"/></svg>
<svg class="i" style="left:1534.60px;top:179.10px;width:16px;height:16px" viewBox="0 0 16 16"><circle cx="8" cy="8" r="6.35" fill="none" stroke="#888d94" stroke-width="1.35"/></svg>
<span class="t " style="top:179.10px;line-height:15px;font-size:11.5px;color:#20242c;letter-spacing:0.149px;left:1579.35px;">$2,450.00</span>
<div class="b" style="left:0.00px;top:229.40px;width:1584.00px;height:1.00px;background:#edf0f5"></div>
<svg class="i" style="left:19.60px;top:214.00px;width:7.8px;height:4.4px;overflow:visible" viewBox="0 0 7.8 4.4"><path fill="none" stroke="#1d2026" stroke-width="1.25"  d="M0.7 0.6L3.9 3.8L7.1 0.6"/></svg>
<span class="t " style="top:208.70px;line-height:15px;font-size:11.5px;color:#20242c;left:41.80px;">2</span>
<span class="t " style="top:208.70px;line-height:15px;font-size:11.5px;color:#20242c;letter-spacing:-0.015px;left:151.30px;">Heating Systems</span>
<span class="t " style="top:208.70px;line-height:15px;font-size:11.5px;color:#20242c;letter-spacing:-0.114px;left:353.79px;">$192,500.00</span>
<span class="t " style="top:208.00px;line-height:15px;font-size:11.5px;color:#3442e0;letter-spacing:0.120px;left:543.41px;">Select All</span>
<span class="t " style="top:208.00px;line-height:15px;font-size:11.5px;color:#3442e0;letter-spacing:0.120px;left:628.30px;">Select All</span>
<span class="t " style="top:208.70px;line-height:15px;font-size:11.5px;color:#20242c;letter-spacing:-0.059px;left:803.44px;">$207,600.00</span>
<span class="t " style="top:208.00px;line-height:15px;font-size:11.5px;color:#3442e0;letter-spacing:0.120px;left:1078.30px;">Select All</span>
<span class="t " style="top:208.70px;line-height:15px;font-size:11.5px;color:#20242c;letter-spacing:-0.087px;left:1253.71px;">$215,250.00</span>
<span class="t " style="top:208.00px;line-height:15px;font-size:11.5px;color:#3442e0;letter-spacing:0.120px;left:1528.30px;">Select All</span>
<div class="b" style="left:522.60px;top:230.40px;width:89.60px;height:28.80px;background:#c6ebdf"></div>
<div class="b" style="left:0.00px;top:258.20px;width:1584.00px;height:1.00px;background:#edf0f5"></div>
<span class="t " style="top:237.50px;line-height:15px;font-size:11.5px;color:#20242c;letter-spacing:-0.483px;left:66.70px;">PEX007</span>
<span class="t " style="top:237.50px;line-height:15px;font-size:11.5px;color:#20242c;letter-spacing:-0.201px;left:151.30px;">Wirsbo PEX Tubing</span>
<span class="t " style="top:237.50px;line-height:15px;font-size:11.5px;color:#20242c;letter-spacing:-0.086px;left:359.81px;">$87,500.00</span>
<span class="t " style="top:237.50px;line-height:15px;font-size:11.5px;color:#20242c;letter-spacing:-0.092px;left:448.70px;">3500 Lin...</span>
<svg class="i" style="left:557.80px;top:236.70px;width:16px;height:16px" viewBox="0 0 16 16"><circle cx="8" cy="8" r="6.35" fill="none" stroke="#888d94" stroke-width="1.35"/></svg>
<svg class="i" style="left:634.60px;top:236.70px;width:16px;height:16px" viewBox="0 0 16 16"><circle cx="8" cy="8" r="6.35" fill="none" stroke="#888d94" stroke-width="1.35"/></svg>
<span class="t " style="top:236.70px;line-height:15px;font-size:11.5px;color:#20242c;letter-spacing:-0.246px;left:697.45px;">$13.25</span>
<span class="t " style="top:237.50px;line-height:15px;font-size:11.5px;color:#20242c;letter-spacing:0.014px;left:809.11px;">$46,375.00</span>
<div class="b" style="left:883.00px;top:230.30px;width:178.60px;height:20.60px;background:#fff;border:1px solid #bac3ce;border-radius:3.5px;box-shadow:0 1px 1.5px rgba(60,70,90,.18)"></div>
<svg class="i" style="left:1037.8px;top:239.3px;width:8.6px;height:4.5px" viewBox="0 0 10 5"><path fill="#535d75" d="M0 0h10L5 5z"/></svg>
<svg class="i" style="left:1084.60px;top:236.70px;width:16px;height:16px" viewBox="0 0 16 16"><circle cx="8" cy="8" r="6.35" fill="none" stroke="#888d94" stroke-width="1.35"/></svg>
<span class="t " style="top:236.70px;line-height:15px;font-size:11.5px;color:#20242c;letter-spacing:-0.196px;left:1147.50px;">$12.50</span>
<span class="t " style="top:237.50px;line-height:15px;font-size:11.5px;color:#20242c;letter-spacing:0.044px;left:1258.84px;">$43,750.00</span>
<div class="b" style="left:1333.00px;top:230.30px;width:178.60px;height:20.60px;background:#fff;border:1px solid #bac3ce;border-radius:3.5px;box-shadow:0 1px 1.5px rgba(60,70,90,.18)"></div>
<svg class="i" style="left:1487.8px;top:239.3px;width:8.6px;height:4.5px" viewBox="0 0 10 5"><path fill="#535d75" d="M0 0h10L5 5z"/></svg>
<svg class="i" style="left:1534.60px;top:236.70px;width:16px;height:16px" viewBox="0 0 16 16"><circle cx="8" cy="8" r="6.35" fill="none" stroke="#888d94" stroke-width="1.35"/></svg>
<span class="t " style="top:236.70px;line-height:15px;font-size:11.5px;color:#20242c;letter-spacing:-0.150px;left:1597.28px;">$12.90</span>
<div class="b" style="left:522.60px;top:259.20px;width:89.60px;height:28.80px;background:#c6ebdf"></div>
<div class="b" style="left:0.00px;top:287.00px;width:1584.00px;height:1.00px;background:#edf0f5"></div>
<span class="t " style="top:266.30px;line-height:15px;font-size:11.5px;color:#20242c;letter-spacing:-0.300px;left:66.70px;">RAD008</span>
<span class="t " style="top:266.30px;line-height:15px;font-size:11.5px;color:#20242c;letter-spacing:-0.100px;left:151.30px;">Runtal Radiator</span>
<span class="t " style="top:266.30px;line-height:15px;font-size:11.5px;color:#20242c;letter-spacing:-0.150px;left:354.15px;">$105,000.00</span>
<span class="t " style="top:266.30px;line-height:15px;font-size:11.5px;color:#20242c;letter-spacing:-0.100px;left:458.80px;">150 Each</span>
<svg class="i" style="left:557.80px;top:265.50px;width:16px;height:16px" viewBox="0 0 16 16"><circle cx="8" cy="8" r="6.35" fill="none" stroke="#888d94" stroke-width="1.35"/></svg>
<svg class="i" style="left:634.60px;top:265.50px;width:16px;height:16px" viewBox="0 0 16 16"><circle cx="8" cy="8" r="6.35" fill="none" stroke="#888d94" stroke-width="1.35"/></svg>
<span class="t " style="top:265.50px;line-height:15px;font-size:11.5px;color:#20242c;letter-spacing:-0.150px;left:681.44px;">$1,075.00</span>
<span class="t " style="top:266.30px;line-height:15px;font-size:11.5px;color:#20242c;letter-spacing:-0.150px;left:804.35px;">$161,225.00</span>
<div class="b" style="left:883.00px;top:259.10px;width:178.60px;height:20.60px;background:#fff;border:1px solid #bac3ce;border-radius:3.5px;box-shadow:0 1px 1.5px rgba(60,70,90,.18)"></div>
<svg class="i" style="left:1037.8px;top:268.1px;width:8.6px;height:4.5px" viewBox="0 0 10 5"><path fill="#535d75" d="M0 0h10L5 5z"/></svg>
<svg class="i" style="left:1084.60px;top:265.50px;width:16px;height:16px" viewBox="0 0 16 16"><circle cx="8" cy="8" r="6.35" fill="none" stroke="#888d94" stroke-width="1.35"/></svg>
<span class="t " style="top:265.50px;line-height:15px;font-size:11.5px;color:#20242c;letter-spacing:-0.150px;left:1131.74px;">$1,143.00</span>
<span class="t " style="top:266.30px;line-height:15px;font-size:11.5px;color:#20242c;letter-spacing:-0.150px;left:1254.35px;">$171,500.00</span>
<div class="b" style="left:1333.00px;top:259.10px;width:178.60px;height:20.60px;background:#fff;border:1px solid #bac3ce;border-radius:3.5px;box-shadow:0 1px 1.5px rgba(60,70,90,.18)"></div>
<svg class="i" style="left:1487.8px;top:268.1px;width:8.6px;height:4.5px" viewBox="0 0 10 5"><path fill="#535d75" d="M0 0h10L5 5z"/></svg>
<svg class="i" style="left:1534.60px;top:265.50px;width:16px;height:16px" viewBox="0 0 16 16"><circle cx="8" cy="8" r="6.35" fill="none" stroke="#888d94" stroke-width="1.35"/></svg>
<span class="t " style="top:265.50px;line-height:15px;font-size:11.5px;color:#20242c;letter-spacing:-0.150px;left:1581.74px;">$1,120.00</span>
</div>
<div class="b" style="left:1655.40px;top:290.20px;width:15.00px;height:370.00px;background:#fff;border-left:1px solid #e6e9ee"></div>
<div class="b" style="left:1656.40px;top:290.20px;width:14.00px;height:355.20px;background:#f8fafc"></div>
<div class="b" style="left:1659.30px;top:292.80px;width:8.40px;height:132.50px;background:#c1c1c1;border-radius:4.2px"></div>
<div class="b" style="left:72.00px;top:558.40px;width:1598.40px;height:1.00px;background:#dde2ea"></div>
<div class="b" style="left:72.00px;top:559.40px;width:1583.40px;height:85.60px;background:#f8fafc"></div>
<div class="b" style="left:72.00px;top:586.80px;width:1583.40px;height:1.00px;background:#edf0f5"></div>
<div class="b" style="left:72.00px;top:615.60px;width:1583.40px;height:1.00px;background:#edf0f5"></div>
<div class="b" style="left:72.00px;top:644.40px;width:1583.40px;height:1.00px;background:#edf0f5"></div>
<span class="t bd" style="top:565.50px;line-height:15px;font-size:11.5px;font-weight:700;color:#15181e;letter-spacing:-0.163px;left:88.70px;">Total Tender Budget</span>
<span class="t bd" style="top:595.10px;line-height:15px;font-size:11.5px;font-weight:700;color:#15181e;letter-spacing:-0.024px;left:88.70px;">Total Value</span>
<span class="t bd" style="top:623.50px;line-height:15px;font-size:11.5px;font-weight:700;color:#15181e;letter-spacing:-0.115px;left:88.70px;">Total Value of Selected Items</span>
<span class="t " style="top:565.50px;line-height:15px;font-size:11.5px;color:#20242c;letter-spacing:0.035px;left:414.64px;">$2,228,500.00</span>
<span class="t " style="top:623.70px;line-height:15px;font-size:11.5px;color:#20242c;left:482.20px;">0</span>
<span class="t " style="top:595.10px;line-height:15px;font-size:11.5px;color:#20242c;letter-spacing:-0.157px;left:775.14px;">$1,463,365.00</span>
<span class="t " style="top:623.70px;line-height:15px;font-size:11.5px;color:#20242c;left:840.40px;">0</span>
<span class="t " style="top:595.10px;line-height:15px;font-size:11.5px;color:#20242c;letter-spacing:-0.157px;left:1224.84px;">$1,473,725.00</span>
<span class="t " style="top:623.70px;line-height:15px;font-size:11.5px;color:#20242c;left:1290.10px;">0</span>
<div class="b" style="left:594.00px;top:205.00px;width:1.00px;height:455.00px;background:#dde2ea"></div>
<div class="b" style="left:72.00px;top:645.40px;width:1583.40px;height:14.60px;background:#fafbfd"></div>
<div class="b" style="left:597.30px;top:649.30px;width:475.00px;height:8.20px;background:#c1c1c1;border-radius:4.1px"></div>
<div class="b" style="left:1670.40px;top:205.00px;width:1.00px;height:455.00px;background:#dde2ea"></div>
<svg class="i" style="left:1679.7px;top:246.6px;width:11.4px;height:8px" viewBox="0 0 11.4 8"><path fill="#14171c" d="M0 0h3.2v8H0zM4.1 0h3.2v8H4.1zM8.2 0h3.2v8H8.2z"/></svg>
<span class="t " style="top:275.90px;line-height:15px;font-size:11.5px;color:#272b33;letter-spacing:-0.268px;left:1663.32px;transform:rotate(90deg);transform-origin:center center;">Columns</span>
<div class="b" style="left:72.00px;top:660.00px;width:1626.00px;height:1.00px;background:#dde2ea"></div>
<div class="b" style="left:72.00px;top:661.00px;width:1626.00px;height:43.00px;background:#f1f4f9;border-radius:0 0 3px 3px"></div>
<span class="t" style="left:1404.3px;top:675.3px;line-height:15px;font-size:11.5px;color:#3d4452;letter-spacing:0.05px"><b>1</b> to <b>3</b> of <b>3</b></span>
<span class="t" style="left:1557.3px;top:675.3px;line-height:15px;font-size:11.5px;color:#3d4452;letter-spacing:-0.32px">Page <b>1</b> of <b>1</b></span>
<div class="b" style="left:1494.30px;top:671.70px;width:20.60px;height:21.00px;border:1px solid #e8ebf1;border-radius:3px"></div>
<svg class="i" style="left:1497.85px;top:675.45px;width:13.5px;height:13.5px;" viewBox="0 0 24 24"><path fill="#8a93a3" d="M18.41 16.59L13.82 12l4.590-4.590L17 6l-6 6 6 6zM6 6h2v12H6z"/></svg>
<div class="b" style="left:1525.30px;top:671.70px;width:20.60px;height:21.00px;border:1px solid #e8ebf1;border-radius:3px"></div>
<svg class="i" style="left:1528.85px;top:675.45px;width:13.5px;height:13.5px;" viewBox="0 0 24 24"><path fill="#8a93a3" d="M15.41 7.41L14 6l-6 6 6 6 1.410-1.410L10.830 12z"/></svg>
<div class="b" style="left:1624.30px;top:671.70px;width:20.60px;height:21.00px;border:1px solid #e8ebf1;border-radius:3px"></div>
<svg class="i" style="left:1627.85px;top:675.45px;width:13.5px;height:13.5px;" viewBox="0 0 24 24"><path fill="#8a93a3" d="M10 6L8.590 7.410 13.170 12l-4.580 4.590L10 18l6-6z"/></svg>
<div class="b" style="left:1655.30px;top:671.70px;width:20.60px;height:21.00px;border:1px solid #e8ebf1;border-radius:3px"></div>
<svg class="i" style="left:1658.85px;top:675.45px;width:13.5px;height:13.5px;" viewBox="0 0 24 24"><path fill="#8a93a3" d="M5.59 7.41L10.18 12l-4.590 4.590L7 18l6-6-6-6zM16 6h2v12h-2z"/></svg>
<div class="b" style="left:72.00px;top:718.30px;width:1626.00px;height:261.70px;background:#fff;border-radius:4px;box-shadow:0 0 9px rgba(50,60,80,.11),0 3px 4px -1px rgba(50,60,80,.17)"></div>
<span class="t m2" style="top:728.80px;line-height:19px;font-size:14.5px;color:#18305e;letter-spacing:0.607px;left:87.00px;">Evaluation Criteria</span>
<div class="b" style="left:72.00px;top:758.20px;width:1626.00px;height:1.00px;background:#dde2ea"></div>
<div class="b" style="left:72.00px;top:759.20px;width:1626.00px;height:42.00px;background:#f1f4f9"></div>
<div class="b" style="left:72.00px;top:801.20px;width:1626.00px;height:1.00px;background:#dde2ea"></div>
<div class="b" style="left:72.00px;top:802.20px;width:1626.00px;height:86.00px;background:#f8fafc"></div>
<div class="b" style="left:72.00px;top:830.00px;width:1626.00px;height:1.00px;background:#edf0f5"></div>
<div class="b" style="left:72.00px;top:858.80px;width:1626.00px;height:1.00px;background:#edf0f5"></div>
<div class="b" style="left:72.00px;top:887.60px;width:1626.00px;height:1.00px;background:#edf0f5"></div>
<div class="b" style="left:297.00px;top:759.00px;width:1.00px;height:129.50px;background:#dde2ea"></div>
<div class="b" style="left:296.20px;top:769.30px;width:1.00px;height:21.00px;background:#dde2ea"></div>
<div class="b" style="left:577.20px;top:769.30px;width:1.00px;height:21.00px;background:#dde2ea"></div>
<div class="b" style="left:857.20px;top:769.30px;width:1.00px;height:21.00px;background:#dde2ea"></div>
<div class="b" style="left:1137.20px;top:769.30px;width:1.00px;height:21.00px;background:#dde2ea"></div>
<div class="b" style="left:1417.20px;top:769.30px;width:1.00px;height:21.00px;background:#dde2ea"></div>
<div class="b" style="left:1696.60px;top:769.30px;width:1.00px;height:21.00px;background:#dde2ea"></div>
<span class="t bd" style="top:772.50px;line-height:15px;font-size:11.5px;font-weight:700;color:#1a2236;letter-spacing:-0.181px;left:89.00px;">Name</span>
<span class="t bd" style="top:772.50px;line-height:15px;font-size:11.5px;font-weight:700;color:#1a2236;letter-spacing:-0.297px;left:314.00px;">Pinnacle Piping Co.</span>
<span class="t bd" style="top:772.50px;line-height:15px;font-size:11.5px;font-weight:700;color:#1a2236;letter-spacing:-0.107px;left:594.00px;">VentFlow Contractors</span>
<span class="t bd" style="top:772.50px;line-height:15px;font-size:11.5px;font-weight:700;color:#1a2236;letter-spacing:-0.179px;left:874.00px;">Thermal Dynamics Services</span>
<span class="t bd" style="top:772.50px;line-height:15px;font-size:11.5px;font-weight:700;color:#1a2236;letter-spacing:-0.274px;left:1153.70px;">FlowTech Systems</span>
<span class="t bd" style="top:772.50px;line-height:15px;font-size:11.5px;font-weight:700;color:#1a2236;letter-spacing:-0.198px;left:1433.70px;">ProPipe Installations</span>
<span class="t " style="top:809.00px;line-height:15px;font-size:11.5px;color:#20242c;letter-spacing:-0.036px;left:88.40px;">Lowest Price</span>
<svg class="i" style="left:162.85px;top:807.45px;width:18.3px;height:18.3px;" viewBox="0 0 24 24"><path fill="#8a9099" d="M12 2C6.480 2 2 6.480 2 12s4.480 10 10 10 10-4.480 10-10S17.520 2 12 2zm1 15h-2v-6h2v6zm0-8h-2V7h2v2z"/></svg>
<span class="t " style="top:837.80px;line-height:15px;font-size:11.5px;color:#20242c;letter-spacing:0.097px;left:88.40px;">Warranty</span>
<svg class="i" style="left:144.55px;top:836.25px;width:18.3px;height:18.3px;" viewBox="0 0 24 24"><path fill="#8a9099" d="M12 2C6.480 2 2 6.480 2 12s4.480 10 10 10 10-4.480 10-10S17.520 2 12 2zm1 15h-2v-6h2v6zm0-8h-2V7h2v2z"/></svg>
<span class="t " style="top:866.60px;line-height:15px;font-size:11.5px;color:#20242c;letter-spacing:-0.000px;left:88.40px;">Lead Time</span>
<svg class="i" style="left:150.85px;top:865.05px;width:18.3px;height:18.3px;" viewBox="0 0 24 24"><path fill="#8a9099" d="M12 2C6.480 2 2 6.480 2 12s4.480 10 10 10 10-4.480 10-10S17.520 2 12 2zm1 15h-2v-6h2v6zm0-8h-2V7h2v2z"/></svg>
<span class="t " style="top:809.00px;line-height:15px;font-size:11.5px;color:#20242c;letter-spacing:-0.015px;left:313.40px;">$1,463,365.00 (40 points)</span>
<span class="t " style="top:837.80px;line-height:15px;font-size:11.5px;color:#20242c;letter-spacing:0.084px;left:313.40px;">24 Months (20 points)</span>
<span class="t " style="top:866.60px;line-height:15px;font-size:11.5px;color:#20242c;letter-spacing:0.021px;left:313.40px;">60 Days (0 points)</span>
<span class="t " style="top:809.00px;line-height:15px;font-size:11.5px;color:#20242c;letter-spacing:-0.053px;left:593.40px;">$1,473,725.00 (0 points)</span>
<span class="t " style="top:837.80px;line-height:15px;font-size:11.5px;color:#20242c;letter-spacing:0.084px;left:593.40px;">24 Months (20 points)</span>
<span class="t " style="top:866.60px;line-height:15px;font-size:11.5px;color:#20242c;letter-spacing:0.038px;left:593.40px;">30 Days (0 points)</span>
<span class="t " style="top:809.00px;line-height:15px;font-size:11.5px;color:#20242c;letter-spacing:-0.095px;left:873.40px;">$1,487,820.00 (0 points)</span>
<span class="t " style="top:837.80px;line-height:15px;font-size:11.5px;color:#20242c;letter-spacing:-0.042px;left:873.40px;">12 Months (0 points)</span>
<span class="t " style="top:866.60px;line-height:15px;font-size:11.5px;color:#20242c;letter-spacing:-0.090px;left:873.40px;">21 Days (0 points)</span>
<span class="t " style="top:809.00px;line-height:15px;font-size:11.5px;color:#20242c;letter-spacing:-0.095px;left:1153.40px;">$1,500,675.00 (0 points)</span>
<span class="t " style="top:837.80px;line-height:15px;font-size:11.5px;color:#20242c;letter-spacing:-0.042px;left:1153.40px;">12 Months (0 points)</span>
<span class="t " style="top:866.60px;line-height:15px;font-size:11.5px;color:#20242c;letter-spacing:-0.090px;left:1153.40px;">21 Days (0 points)</span>
<span class="t " style="top:809.00px;line-height:15px;font-size:11.5px;color:#20242c;letter-spacing:-0.041px;left:1433.40px;">$1,492,550.00 (0 points)</span>
<span class="t " style="top:837.80px;line-height:15px;font-size:11.5px;color:#20242c;letter-spacing:-0.042px;left:1433.40px;">18 Months (0 points)</span>
<span class="t " style="top:866.60px;line-height:15px;font-size:11.5px;color:#20242c;letter-spacing:-0.054px;left:1433.40px;">14 Days (20 points)</span>
<div class="b" style="left:499.30px;top:808.00px;width:62.40px;height:17.90px;background:#fff;border:1px solid #a0cbbc;border-radius:3.5px"></div>
<span class="t m" style="top:809.70px;line-height:15px;font-size:11.5px;color:#1c2740;letter-spacing:0.188px;left:507.34px;">Awarded</span>
<div class="b" style="left:499.30px;top:836.90px;width:62.40px;height:17.90px;background:#fff;border:1px solid #a0cbbc;border-radius:3.5px"></div>
<span class="t m" style="top:838.60px;line-height:15px;font-size:11.5px;color:#1c2740;letter-spacing:0.188px;left:507.34px;">Awarded</span>
<div class="b" style="left:779.20px;top:836.90px;width:62.40px;height:17.90px;background:#fff;border:1px solid #a0cbbc;border-radius:3.5px"></div>
<span class="t m" style="top:838.60px;line-height:15px;font-size:11.5px;color:#1c2740;letter-spacing:0.188px;left:787.24px;">Awarded</span>
<div class="b" style="left:1619.00px;top:865.70px;width:62.40px;height:17.90px;background:#fff;border:1px solid #a0cbbc;border-radius:3.5px"></div>
<span class="t m" style="top:867.40px;line-height:15px;font-size:11.5px;color:#1c2740;letter-spacing:0.188px;left:1627.04px;">Awarded</span>
<div class="b" style="left:72.00px;top:937.20px;width:1626.00px;height:1.00px;background:#dde2ea"></div>
<div class="b" style="left:72.00px;top:938.20px;width:1626.00px;height:41.80px;background:#f1f4f9;border-radius:0 0 3px 3px"></div>
<span class="t" style="left:1404.3px;top:952.3px;line-height:15px;font-size:11.5px;color:#3d4452;letter-spacing:0.05px"><b>1</b> to <b>3</b> of <b>3</b></span>
<span class="t" style="left:1557.3px;top:952.3px;line-height:15px;font-size:11.5px;color:#3d4452;letter-spacing:-0.32px">Page <b>1</b> of <b>1</b></span>
<div class="b" style="left:1494.30px;top:948.70px;width:20.60px;height:21.00px;border:1px solid #e8ebf1;border-radius:3px"></div>
<svg class="i" style="left:1497.85px;top:952.45px;width:13.5px;height:13.5px;" viewBox="0 0 24 24"><path fill="#8a93a3" d="M18.41 16.59L13.82 12l4.590-4.590L17 6l-6 6 6 6zM6 6h2v12H6z"/></svg>
<div class="b" style="left:1525.30px;top:948.70px;width:20.60px;height:21.00px;border:1px solid #e8ebf1;border-radius:3px"></div>
<svg class="i" style="left:1528.85px;top:952.45px;width:13.5px;height:13.5px;" viewBox="0 0 24 24"><path fill="#8a93a3" d="M15.41 7.41L14 6l-6 6 6 6 1.410-1.410L10.830 12z"/></svg>
<div class="b" style="left:1624.30px;top:948.70px;width:20.60px;height:21.00px;border:1px solid #e8ebf1;border-radius:3px"></div>
<svg class="i" style="left:1627.85px;top:952.45px;width:13.5px;height:13.5px;" viewBox="0 0 24 24"><path fill="#8a93a3" d="M10 6L8.590 7.410 13.170 12l-4.580 4.590L10 18l6-6z"/></svg>
<div class="b" style="left:1655.30px;top:948.70px;width:20.60px;height:21.00px;border:1px solid #e8ebf1;border-radius:3px"></div>
<svg class="i" style="left:1658.85px;top:952.45px;width:13.5px;height:13.5px;" viewBox="0 0 24 24"><path fill="#8a93a3" d="M5.59 7.41L10.18 12l-4.590 4.590L7 18l6-6-6-6zM16 6h2v12h-2z"/></svg>
<div class="b" style="left:57.20px;top:0.00px;width:2.00px;height:992.00px;background:#fdfdfe"></div>
</div></body></html>
